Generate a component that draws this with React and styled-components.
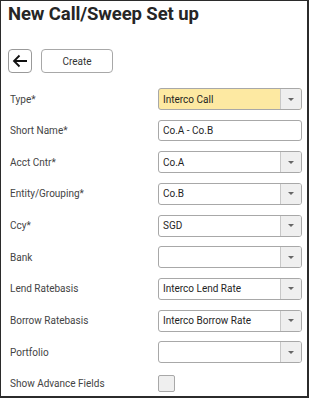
import React from "react";
import styled, { createGlobalStyle } from "styled-components";

const Global = createGlobalStyle`
  html, body { margin: 0; padding: 0; background: #fff; }
  body { font-family: Roboto, "Liberation Sans", Arial, sans-serif; }
`;

const Frame = styled.div`
  box-sizing: border-box;
  width: 309px;
  height: 398px;
  border: 1px solid #2b2b2b;
  border-right-width: 2px;
  border-bottom-width: 2px;
  padding: 0 0 0 7px;
  overflow: hidden;
`;

const Title = styled.h1`
  margin: 0;
  padding-top: 2px;
  font-family: Roboto, "Liberation Sans", Arial, sans-serif;
  font-weight: 700;
  font-size: 18.5px;
  line-height: 22px;
  color: #262626;
  letter-spacing: -0.1px;
`;

const Toolbar = styled.div`
  display: flex;
  gap: 9px;
  margin-top: 24px;
  margin-bottom: 15px;
`;

const IconButton = styled.button`
  box-sizing: border-box;
  width: 24px;
  height: 24px;
  padding: 0;
  display: flex;
  align-items: center;
  justify-content: center;
  border: 1px solid #9a9a9a;
  border-radius: 4px;
  background: #fff;
`;

const TextButton = styled.button`
  box-sizing: border-box;
  width: 72px;
  height: 24px;
  border: 1px solid #a8a8a8;
  border-radius: 4px;
  background: #fff;
  font-family: Roboto, "Liberation Sans", Arial, sans-serif;
  font-size: 10px;
  color: #333;
`;

const Form = styled.div`
  display: flex;
  flex-direction: column;
  gap: 9.67px;
`;

const Row = styled.div`
  display: grid;
  grid-template-columns: 150px 144px;
  align-items: center;
  height: 22px;
`;

const Label = styled.div`
  padding-left: 2px;
  font-size: 10px;
  color: #444;
`;

const Select = styled.div`
  box-sizing: border-box;
  height: 22px;
  display: flex;
  border: 1px solid #a8a8a8;
  border-radius: 3px;
  background: ${(p) => (p.$highlight ? "#fde9a2" : "#fff")};
  overflow: hidden;
`;

const Value = styled.div`
  flex: 1;
  padding-left: 4px;
  display: flex;
  align-items: center;
  font-size: 10px;
  color: #1f1f1f;
`;

const Arrow = styled.div`
  width: 20px;
  border-left: 1px solid #c8c8c8;
  background: #efefef;
  display: flex;
  align-items: center;
  justify-content: center;
  &::after {
    content: "";
    border-left: 3px solid transparent;
    border-right: 3px solid transparent;
    border-top: 3px solid #666;
  }
`;

const Input = styled.div`
  box-sizing: border-box;
  height: 21px;
  display: flex;
  align-items: center;
  padding-left: 4px;
  border: 1px solid #a8a8a8;
  border-radius: 3px;
  font-size: 10px;
  color: #1f1f1f;
`;

const Checkbox = styled.div`
  box-sizing: border-box;
  width: 17px;
  height: 17px;
  border: 1px solid #a8a8a8;
  border-radius: 2px;
  background: #efefef;
`;

const rows = [
  { label: "Type*", kind: "select", value: "Interco Call", highlight: true },
  { label: "Short Name*", kind: "input", value: "Co.A - Co.B" },
  { label: "Acct Cntr*", kind: "select", value: "Co.A" },
  { label: "Entity/Grouping*", kind: "select", value: "Co.B" },
  { label: "Ccy*", kind: "select", value: "SGD" },
  { label: "Bank", kind: "select", value: "" },
  { label: "Lend Ratebasis", kind: "select", value: "Interco Lend Rate" },
  { label: "Borrow Ratebasis", kind: "select", value: "Interco Borrow Rate" },
  { label: "Portfolio", kind: "select", value: "" },
  { label: "Show Advance Fields", kind: "check" },
];

export default function App() {
  return (
    <>
      <Global />
      <Frame>
        <Title>New Call/Sweep Set up</Title>
        <Toolbar>
          <IconButton aria-label="Back">
            <svg width="16" height="14" viewBox="0 0 16 14">
              <path d="M15 7H2M7.5 1.5L2 7l5.5 5.5" fill="none" stroke="#111" strokeWidth="1.8" />
            </svg>
          </IconButton>
          <TextButton>Create</TextButton>
        </Toolbar>
        <Form>
          {rows.map((r) => (
            <Row key={r.label}>
              <Label>{r.label}</Label>
              {r.kind === "select" && (
                <Select $highlight={r.highlight}>
                  <Value>{r.value}</Value>
                  <Arrow />
                </Select>
              )}
              {r.kind === "input" && <Input>{r.value}</Input>}
              {r.kind === "check" && <Checkbox />}
            </Row>
          ))}
        </Form>
      </Frame>
    </>
  );
}
